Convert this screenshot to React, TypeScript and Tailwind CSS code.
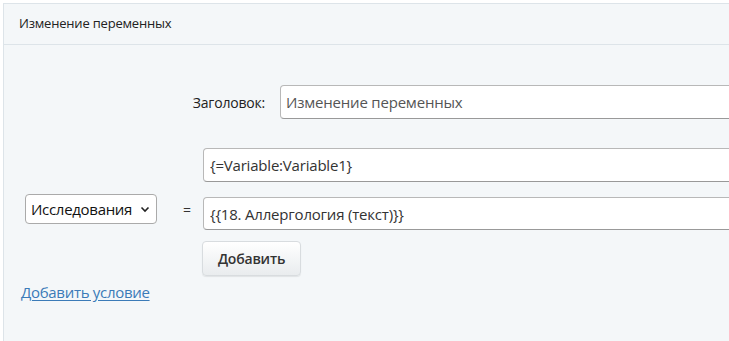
import React from 'react';

const font = { fontFamily: '"Open Sans", "Noto Sans", sans-serif' };

const App = () => {
  return (
    <div className="w-[729px] h-[341px] overflow-hidden bg-white" style={font}>
      <div className="ml-[3px] mt-[3px] w-[800px] h-[400px] border-l border-t border-[#dde4e9] bg-[#f4f7f9]">
        {/* Header */}
        <div className="h-[41px] border-b border-[#dde4e9] flex items-center pl-[15px] text-[13px] tracking-[-0.2px] text-[#222]">
          Изменение переменных
        </div>

        {/* Title row */}
        <div className="flex items-center mt-[40px]">
          <div className="w-[276px] text-right pr-[15px] text-[14px] tracking-[-0.2px] text-[#222]">Заголовок:</div>
          <input
            defaultValue="Изменение переменных"
            className="w-[520px] h-[34px] rounded-[4px] border border-[#b8b8b8] border-b-[#999] bg-white px-[5px] text-[15px] tracking-[-0.2px] text-[#555] outline-none"
          />
        </div>

        {/* Condition row */}
        <div className="flex items-center mt-[29px]">
          <div className="w-[199px] flex items-center pl-[21px] pt-[40px]">
            <div className="w-[132px] h-[30px] rounded-[4px] border border-[#aaa] bg-white flex items-center justify-between pl-[5px] pr-[6px] text-[15px] tracking-[-0.3px] text-[#111]">
              <span>Исследования</span>
              <svg width="10" height="7" viewBox="0 0 10 7" fill="none">
                <path d="M1.5 1.5 L5 5 L8.5 1.5" stroke="#222" strokeWidth="1.6" />
              </svg>
            </div>
            <span className="ml-[26px] text-[14px] text-[#333]">=</span>
          </div>
          <div className="flex flex-col gap-[15px]">
            <input
              defaultValue="{=Variable:Variable1}"
              className="w-[560px] h-[34px] rounded-[4px] border border-[#b8b8b8] border-b-[#999] bg-white px-[6px] text-[15px] tracking-[-0.2px] text-[#333] outline-none"
            />
            <input
              defaultValue="{{18. Аллергология (текст)}}"
              className="w-[560px] h-[33px] rounded-[4px] border border-[#b8b8b8] border-b-[#999] bg-white px-[6px] text-[15px] tracking-[-0.2px] text-[#333] outline-none"
            />
          </div>
        </div>

        {/* Add button */}
        <div className="ml-[198px] mt-[11px]">
          <button className="w-[99px] h-[35px] rounded-[4px] border border-[#d8dcdf] bg-gradient-to-b from-white to-[#e9ecee] shadow-[0_1px_1px_rgba(0,0,0,0.08)] text-[14px] font-semibold tracking-[-0.2px] text-[#333]">
            Добавить
          </button>
        </div>

        {/* Add condition link */}
        <div className="ml-[17px] mt-[4px]">
          <a href="#" className="text-[15px] tracking-[-0.3px] text-[#3b7bb8] underline underline-offset-2">
            Добавить условие
          </a>
        </div>
      </div>
    </div>
  );
};

export default App;
